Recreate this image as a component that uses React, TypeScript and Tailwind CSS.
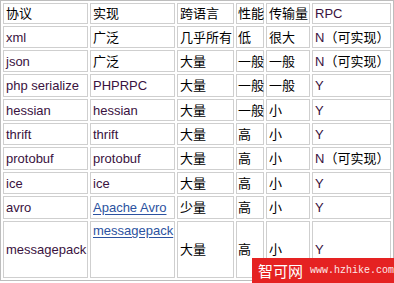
import React from "react";

const latin = "text-[#3a1240]";

function NText() {
  return (
    <span>
      <span className={latin}>N</span>（可实现）
    </span>
  );
}

function Link({ children }: { children: React.ReactNode }) {
  return <span className="text-[#2c52a0] underline underline-offset-2">{children}</span>;
}

const widths = ["w-[85px]", "w-[85px]", "w-[57px]", "w-[28px]", "w-[44px]", "w-[79px]"];

const rows: { h: string; cells: React.ReactNode[] }[] = [
  { h: "h-[21px]", cells: ["协议", "实现", "跨语言", "性能", "传输量", <span className={latin}>RPC</span>] },
  { h: "h-[22px]", cells: [<span className={latin}>xml</span>, "广泛", "几乎所有", "低", "很大", <NText />] },
  { h: "h-[22px]", cells: [<span className={latin}>json</span>, "广泛", "大量", "一般", "一般", <NText />] },
  { h: "h-[23px]", cells: [<span className={latin}>php serialize</span>, <span className={latin}>PHPRPC</span>, "大量", "一般", "一般", <span className={latin}>Y</span>] },
  { h: "h-[22px]", cells: [<span className={latin}>hessian</span>, <span className={latin}>hessian</span>, "大量", "一般", "小", <span className={latin}>Y</span>] },
  { h: "h-[22px]", cells: [<span className={latin}>thrift</span>, <span className={latin}>thrift</span>, "大量", "高", "小", <span className={latin}>Y</span>] },
  { h: "h-[23px]", cells: [<span className={latin}>protobuf</span>, <span className={latin}>protobuf</span>, "大量", "高", "小", <NText />] },
  { h: "h-[22px]", cells: [<span className={latin}>ice</span>, <span className={latin}>ice</span>, "大量", "高", "小", <span className={latin}>Y</span>] },
  { h: "h-[23px]", cells: [<span className={latin}>avro</span>, <Link>Apache Avro</Link>, "少量", "高", "小", <span className={latin}>Y</span>] },
];

const cellCls = "border border-[#cfcfcf] pl-[2px] pr-0 py-0 align-middle text-left whitespace-nowrap";

export default function App() {
  return (
    <div
      className="relative w-[394px] h-[283px] bg-white overflow-hidden text-[13px] leading-[15px] text-black"
      style={{ fontFamily: '"Liberation Sans", "Noto Sans CJK SC", sans-serif' }}
    >
      <table className="w-[394px] table-fixed border-separate border-spacing-[2px] border border-[#bdbdbd]">
        <tbody>
          {rows.map((r, i) => (
            <tr key={i} className={r.h}>
              {r.cells.map((c, j) => (
                <td key={j} className={cellCls + (i === 0 ? " " + widths[j] : "") + (j === 3 ? " !pl-[1px]" : "")}>
                  {c}
                </td>
              ))}
            </tr>
          ))}
          <tr className="h-[57px]">
            <td className={cellCls}>
              <span className={latin}>messagepack</span>
            </td>
            <td className={cellCls + " !align-top"}>
              <div className="pt-[1px]">
                <Link>messagepack</Link>
              </div>
            </td>
            <td className={cellCls}>大量</td>
            <td className={cellCls + " !pl-[1px]"}>高</td>
            <td className={cellCls}>小</td>
            <td className={cellCls}>
              <span className={latin}>Y</span>
            </td>
          </tr>
        </tbody>
      </table>

      {/* watermark */}
      <div className="absolute left-[252px] top-[258px] w-[142px] h-[25px] bg-[#e52222] flex items-center gap-[7px] pl-[6px] whitespace-nowrap">
        <span className="text-white text-[15px] leading-none" style={{ fontFamily: '"Noto Sans CJK SC", sans-serif' }}>
          智可网
        </span>
        <span
          className="text-[#fde8e8] text-[10px] leading-none"
          style={{ fontFamily: '"Liberation Mono", monospace' }}
        >
          www.hzhike.com
        </span>
      </div>
    </div>
  );
}
